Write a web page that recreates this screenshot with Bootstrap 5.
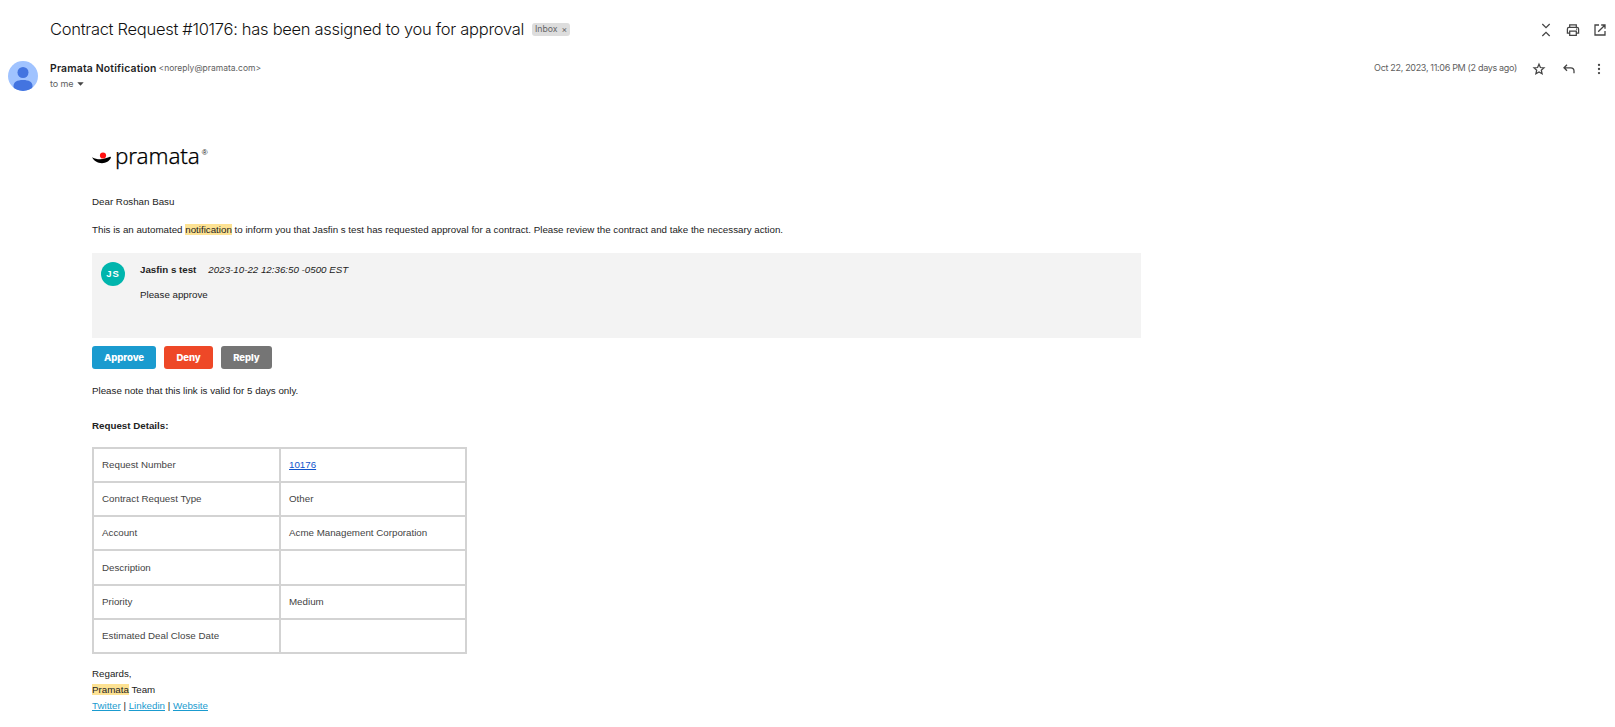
<!DOCTYPE html>
<html lang="en">
<head>
<meta charset="utf-8">
<meta name="viewport" content="width=device-width, initial-scale=1">
<title>Contract Request #10176</title>
<link rel="stylesheet" href="https://cdn.jsdelivr.net/npm/bootstrap@5.3.0/dist/css/bootstrap.min.css">
<style>
body{font-family:"Liberation Sans",Arial,sans-serif;font-size:9.75px;line-height:16px;color:#222;background:#fff;overflow:hidden}
svg{display:block;flex:none}
.ui{font-family:Inter,Roboto,sans-serif}
.subject-bar{height:40px;margin-top:10px;padding:0 8px 0 50px}
.subject{font-size:16.5px;font-weight:300;letter-spacing:-.291px;line-height:24px;padding-bottom:2px;color:#111;white-space:nowrap}
.label-chip{height:13px;margin-left:8px;margin-bottom:1px;padding:0 3px;border-radius:3px;background:#ddd;color:#666;font-size:8.7px;line-height:13px}
.sender-bar{height:34px;margin-top:9px;padding:0 9px 0 8px}
.sender{margin-left:12px;padding-top:2px;line-height:15px}
.sender-name{font-size:10.4px;letter-spacing:.18px;color:#1f1f1f}
.soft{font-size:8.5px;color:#5e5e5e}
.stamp{font-size:9px;letter-spacing:-.32px;color:#5e5e5e;white-space:nowrap}
.mail{margin:50px 0 0 92px;width:1049px}
.logo{height:26px}
.logo-word{font-family:"Noto Sans","Open Sans",sans-serif;font-weight:300;font-size:22.4px;letter-spacing:-.1px;line-height:26px;color:#000;-webkit-text-stroke:.25px #000}
.logo-reg{font-size:8px;line-height:8px;color:#222}
.hit{background:#fde293;color:#222}
.comment{height:85px;background:#f3f3f3;padding:9px}
.initials{width:24px;height:24px;background:#00b5ad;color:#fff;font-size:9.5px;letter-spacing:.9px;line-height:24px}
.act{height:23px;padding:0 12px;border:0;border-radius:3px;color:#fff;font-family:Inter,sans-serif;font-weight:800;font-size:9.6px;letter-spacing:-.1px;line-height:23px}
.act-ok{background:#1a9bcf}.act-no{background:#ee4827}.act-re{background:#757575}
.details{width:375px;height:207px;border-collapse:collapse;color:#444;table-layout:fixed}
.details td{border:2px solid #d3d3d3;padding:0 8px;height:34.1px;vertical-align:middle}
.blue{color:#15c}
.cyan{color:#1a9bcf}
</style>
</head>
<body>
<header class="ui">
  <div class="subject-bar d-flex align-items-center">
    <h1 class="subject m-0">Contract Request #10176: has been assigned to you for approval</h1>
    <span class="label-chip d-flex">Inbox<span class="ms-1">×</span></span>
    <div class="ms-auto d-flex align-items-center" style="gap:13px">
      <svg width="14" height="14" viewBox="0 0 14 14" fill="none" stroke="#444" stroke-width="1.25"><path d="M3.3 1 7 4.7 10.7 1M3.3 13 7 9.3 10.7 13"/></svg>
      <svg width="14" height="14" viewBox="0 0 14 14" fill="none" stroke="#444" stroke-width="1.25"><path d="M3.7 4.2V1.9h6.6v2.3M3.7 10.2H1.4V6c0-1 .6-1.7 1.6-1.7h8c1 0 1.6.7 1.6 1.7v4.2h-2.3M3.7 8.1h6.6v4.2H3.7z"/><path d="M10 6.2h1.2"/></svg>
      <svg width="14" height="14" viewBox="0 0 14 14" fill="none" stroke="#444" stroke-width="1.3"><path d="M6 2H2v10h10V8M8.2 2H12v3.800M12 2 5.200 8.800"/></svg>
    </div>
  </div>
  <div class="sender-bar d-flex">
    <svg width="30" height="34" viewBox="0 0 30 34"><defs><clipPath id="disc"><circle cx="15" cy="17" r="15"/></clipPath></defs><circle cx="15" cy="17" r="15" fill="#a0c3ff"/><g fill="#4374e0" clip-path="url(#disc)"><circle cx="15" cy="13.500" r="5.500"/><path d="M5.500 27c0-4 3.500-6 9.500-6s9.500 2 9.500 6v6h-19z"/></g></svg>
    <div class="sender">
      <div class="d-flex align-items-center"><strong class="sender-name fw-semibold">Pramata Notification</strong><span class="soft" style="margin-left:2px">&lt;noreply@pramata.com&gt;</span></div>
      <div class="d-flex align-items-center"><span class="stamp" style="letter-spacing:-.08px">to me</span><svg width="7" height="4" viewBox="0 0 7 4" style="margin-left:3px"><path d="M.3.3h6.400L3.500 3.700z" fill="#444"/></svg></div>
    </div>
    <div class="ms-auto d-flex align-items-center" style="height:20px">
      <span class="stamp" style="margin-right:15px;margin-top:-2px">Oct 22, 2023, 11:06 PM (2 days ago)</span>
      <svg width="14" height="14" viewBox="0 0 14 14" fill="none" stroke="#444" stroke-width="1.25"><path d="m7 2.200 1.400 3.300 3.600.3-2.700 2.400.8 3.500L7 9.900l-3.100 1.800.8-3.500L2 5.800l3.600-.3z"/></svg>
      <svg style="margin-left:16px" width="14" height="14" viewBox="0 0 14 14" fill="none" stroke="#444" stroke-width="1.3"><path d="M5 2.800 2 5.800l3 3M2 5.800h6.800c2 0 3.200 1.200 3.200 3.200v2.300"/></svg>
      <svg style="margin-left:16px" width="14" height="14" viewBox="0 0 14 14" fill="#444"><circle cx="7" cy="2.900" r="1.150"/><circle cx="7" cy="7" r="1.150"/><circle cx="7" cy="11.100" r="1.150"/></svg>
    </div>
  </div>
</header>
<main class="mail">
  <div class="logo d-flex">
    <svg width="23" height="26" viewBox="0 0 23 26"><circle cx="11" cy="12.500" r="3.100" fill="#f11"/><path d="M0 14.300c3 1.400 5 2 8 2 4 0 7.500-2 10-2.600.8 0 1.200.6.800 1.300-1.300 3-4.800 5.200-8.800 5.200-4.500 0-8-2.400-10-5.900z" fill="#000"/></svg>
    <span class="logo-word">pramata</span><span class="logo-reg" style="margin:6px 0 0 2px">®</span>
  </div>
  <p style="margin:25px 0 12px">Dear Roshan Basu</p>
  <p style="margin:0 0 15px">This is an automated <span class="hit">notification</span> to inform you that Jasfin s test has requested approval for a contract. Please review the contract and take the necessary action.</p>
  <section class="comment d-flex">
    <div class="initials rounded-circle text-center fw-bold">JS</div>
    <div style="margin-left:15px">
      <div class="d-flex"><strong>Jasfin s test</strong><em style="margin-left:12px">2023-10-22 12:36:50 -0500 EST</em></div>
      <div style="margin-top:9px">Please approve</div>
    </div>
  </section>
  <div class="d-flex" style="gap:8.5px;margin-top:8px">
    <button class="btn act act-ok">Approve</button>
    <button class="btn act act-no">Deny</button>
    <button class="btn act act-re">Reply</button>
  </div>
  <p style="margin:14px 0 19px">Please note that this link is valid for 5 days only.</p>
  <p class="fw-bold" style="margin:0 0 13px">Request Details:</p>
  <table class="details">
    <colgroup><col style="width:187px"><col></colgroup>
    <tr><td>Request Number</td><td><a class="blue" href="#">10176</a></td></tr>
    <tr><td>Contract Request Type</td><td>Other</td></tr>
    <tr><td>Account</td><td>Acme Management Corporation</td></tr>
    <tr><td>Description</td><td></td></tr>
    <tr><td>Priority</td><td>Medium</td></tr>
    <tr><td>Estimated Deal Close Date</td><td></td></tr>
  </table>
  <footer style="margin-top:12px">
    <div>Regards,</div>
    <div><span class="hit">Pramata</span> Team</div>
    <div><a class="cyan" href="#">Twitter</a> | <a class="cyan" href="#">Linkedin</a> | <a class="cyan" href="#">Website</a></div>
  </footer>
</main>
<script src="https://cdn.jsdelivr.net/npm/bootstrap@5.3.0/dist/js/bootstrap.bundle.min.js"></script>
</body>
</html>
